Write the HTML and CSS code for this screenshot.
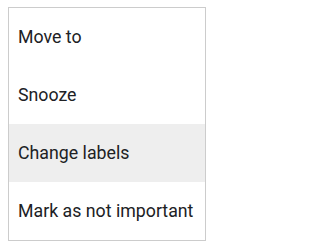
FILE: index.html
```html
<!DOCTYPE html>
<html>
<head>
<meta charset="utf-8">
<link rel="stylesheet" href="styles.css">
</head>
<body>
<ul class="menu">
  <li class="item">Move to</li>
  <li class="item">Snooze</li>
  <li class="item active">Change labels</li>
  <li class="item">Mark as not important</li>
</ul>
</body>
</html>
```
FILE: styles.css
```css
html, body {
  margin: 0;
  padding: 0;
  background: #ffffff;
}
body {
  padding: 7px 0 0 8px;
}
.menu {
  list-style: none;
  margin: 0;
  padding: 0;
  width: 196px;
  border: 1px solid #cccccc;
  font-family: Roboto, "Liberation Sans", sans-serif;
  font-size: 17.75px;
  color: #202124;
}
.item {
  height: 58px;
  display: flex;
  align-items: center;
  padding: 0 9px;
  white-space: nowrap;
}
.active {
  background: #eeeeee;
}
```
